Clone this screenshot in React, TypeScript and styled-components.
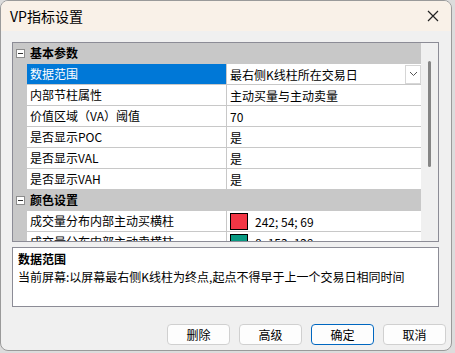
import styled, { createGlobalStyle } from "styled-components";

const Global = createGlobalStyle`
  html, body {
    margin: 0;
    padding: 0;
    background: #dcdcdc;
  }
  body {
    font-family: "Noto Sans CJK SC", "Noto Sans", sans-serif;
    font-size: 12px;
    color: #000;
  }
`;

const Window = styled.div`
  width: 452px;
  height: 351px;
  box-sizing: border-box;
  border: 1px solid #9a9a9a;
  border-radius: 8px;
  overflow: hidden;
  background: #f0f0f0;
  display: flex;
  flex-direction: column;
`;

const TitleBar = styled.div`
  height: 30px;
  flex: none;
  background: #f9f1e8;
  display: flex;
  align-items: center;
  justify-content: space-between;
  padding: 0 8px 0 9px;
  font-size: 14px;
`;

const CloseButton = styled.div`
  width: 20px;
  height: 20px;
  display: flex;
  align-items: center;
  justify-content: center;
`;

const Body = styled.div`
  flex: 1;
  display: flex;
  flex-direction: column;
  padding: 11px 11px 0 11px;
`;

const Grid = styled.div`
  height: 200px;
  box-sizing: border-box;
  border: 1px solid #8c8c96;
  display: flex;
  background: #fff;
  margin-right: 1px;
`;

const Rows = styled.div`
  flex: 1;
  overflow: hidden;
  background: #c8c8c8;
`;

const Row = styled.div<{ $category?: boolean }>`
  display: grid;
  grid-template-columns: 14px 200px 1fr;
  height: 21px;
  box-sizing: border-box;
  background: ${(p) => (p.$category ? "#c8c8c8" : "transparent")};
`;

const Margin = styled.div`
  display: flex;
  align-items: center;
  justify-content: center;
`;

const Toggle = styled.div`
  width: 7px;
  height: 7px;
  border: 1px solid #8c8c8c;
  background: #fff;
  position: relative;
  &::after {
    content: "";
    position: absolute;
    left: 1px;
    right: 1px;
    top: 3px;
    height: 1px;
    background: #333;
  }
`;

const CategoryName = styled.div`
  grid-column: 2 / 4;
  font-weight: bold;
  line-height: 20px;
  padding-left: 3px;
`;

const Name = styled.div<{ $selected?: boolean }>`
  background: ${(p) => (p.$selected ? "#0078d7" : "#fff")};
  color: ${(p) => (p.$selected ? "#fff" : "#000")};
  border-bottom: 1px solid #c8c8c8;
  border-right: 1px solid #c8c8c8;
  line-height: 20px;
  padding-left: 3px;
  white-space: nowrap;
  overflow: hidden;
`;

const Value = styled.div`
  background: #fff;
  border-bottom: 1px solid #c8c8c8;
  display: flex;
  align-items: center;
  padding-left: 3px;
  gap: 7px;
  white-space: nowrap;
  overflow: hidden;
`;

const ValueText = styled.span`
  flex: 1;
`;

const DropButton = styled.div`
  width: 16px;
  height: 19px;
  box-sizing: border-box;
  border: 1px solid #d6d6d6;
  background: #fff;
  display: flex;
  align-items: center;
  justify-content: center;
`;

const Swatch = styled.div<{ $color: string }>`
  width: 18px;
  height: 17px;
  box-sizing: border-box;
  border: 1px solid #000;
  background: ${(p) => p.$color};
  flex: none;
`;

const ScrollTrack = styled.div`
  width: 17px;
  background: #f0f0f0;
  display: flex;
  justify-content: center;
  padding-top: 18px;
  box-sizing: border-box;
`;

const Thumb = styled.div`
  width: 3px;
  height: 106px;
  border-radius: 2px;
  background: #858585;
`;

const Description = styled.div`
  margin-top: 5px;
  height: 60px;
  box-sizing: border-box;
  border: 1px solid #8c8c96;
  background: #fff;
  padding: 2px 5px;
  margin-right: 1px;
`;

const DescTitle = styled.div`
  font-weight: bold;
  line-height: 18px;
`;

const DescText = styled.div`
  line-height: 18px;
`;

const Footer = styled.div`
  display: flex;
  justify-content: flex-end;
  gap: 9px;
  padding-top: 17px;
  margin-right: -6px;
`;

const Button = styled.div<{ $primary?: boolean }>`
  width: 63px;
  height: 21px;
  box-sizing: border-box;
  border: 1px solid ${(p) => (p.$primary ? "#0067c0" : "#d0d0d0")};
  border-radius: 4px;
  background: #fdfdfd;
  display: flex;
  align-items: center;
  justify-content: center;
  font-size: 12px;
`;

const Chevron = () => (
  <svg width="9" height="6" viewBox="0 0 9 6">
    <path d="M1 1 L4.5 4.5 L8 1" fill="none" stroke="#555" strokeWidth="1" />
  </svg>
);

const CloseIcon = () => (
  <svg width="12" height="12" viewBox="0 0 12 12">
    <path d="M1 1 L11 11 M11 1 L1 11" stroke="#222" strokeWidth="1.2" />
  </svg>
);

type Prop = {
  name: string;
  value: string;
  selected?: boolean;
  drop?: boolean;
  color?: string;
};

type Section = { title: string; props: Prop[] };

const sections: Section[] = [
  {
    title: "基本参数",
    props: [
      { name: "数据范围", value: "最右侧K线柱所在交易日", selected: true, drop: true },
      { name: "内部节柱属性", value: "主动买量与主动卖量" },
      { name: "价值区域（VA）阈值", value: "70" },
      { name: "是否显示POC", value: "是" },
      { name: "是否显示VAL", value: "是" },
      { name: "是否显示VAH", value: "是" },
    ],
  },
  {
    title: "颜色设置",
    props: [
      { name: "成交量分布内部主动买横柱", value: "242; 54; 69", color: "rgb(242,54,69)" },
      { name: "成交量分布内部主动卖横柱", value: "8; 153; 129", color: "rgb(8,153,129)" },
    ],
  },
];

export default function App() {
  return (
    <>
      <Global />
      <Window>
        <TitleBar>
          <span>VP指标设置</span>
          <CloseButton>
            <CloseIcon />
          </CloseButton>
        </TitleBar>
        <Body>
          <Grid>
            <Rows>
              {sections.map((s) => (
                <div key={s.title}>
                  <Row $category>
                    <Margin>
                      <Toggle />
                    </Margin>
                    <CategoryName>{s.title}</CategoryName>
                  </Row>
                  {s.props.map((p) => (
                    <Row key={p.name}>
                      <Margin />
                      <Name $selected={p.selected}>{p.name}</Name>
                      <Value>
                        {p.color && <Swatch $color={p.color} />}
                        <ValueText>{p.value}</ValueText>
                        {p.drop && (
                          <DropButton>
                            <Chevron />
                          </DropButton>
                        )}
                      </Value>
                    </Row>
                  ))}
                </div>
              ))}
            </Rows>
            <ScrollTrack>
              <Thumb />
            </ScrollTrack>
          </Grid>
          <Description>
            <DescTitle>数据范围</DescTitle>
            <DescText>当前屏幕:以屏幕最右侧K线柱为终点,起点不得早于上一个交易日相同时间</DescText>
          </Description>
          <Footer>
            <Button>删除</Button>
            <Button>高级</Button>
            <Button $primary>确定</Button>
            <Button>取消</Button>
          </Footer>
        </Body>
      </Window>
    </>
  );
}
